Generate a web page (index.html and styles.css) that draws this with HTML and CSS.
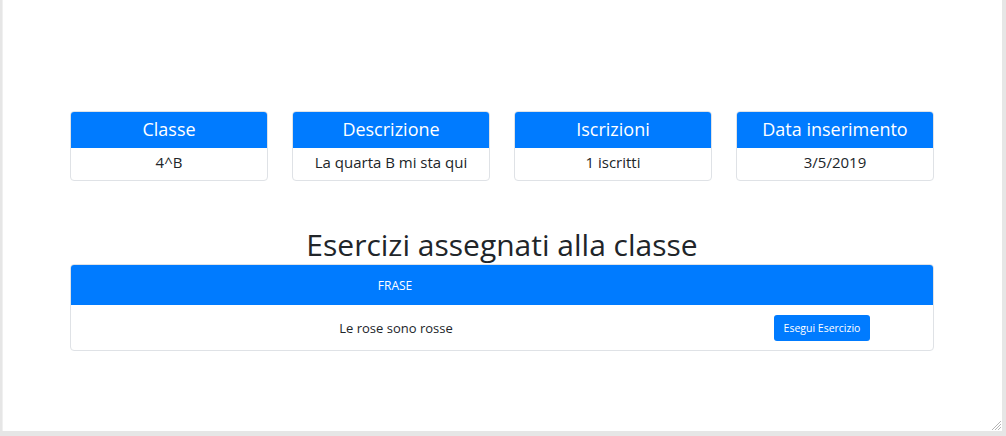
FILE: index.html
```html
<!DOCTYPE html>
<html lang="it">
<head>
<meta charset="utf-8">
<title>Classe</title>
<link rel="stylesheet" href="styles.css">
</head>
<body>
<div class="frame">
  <div class="container">
    <div class="cards">
      <div class="card"><div class="card-head">Classe</div><div class="card-body">4^B</div></div>
      <div class="card"><div class="card-head">Descrizione</div><div class="card-body">La quarta B mi sta qui</div></div>
      <div class="card"><div class="card-head">Iscrizioni</div><div class="card-body">1 iscritti</div></div>
      <div class="card"><div class="card-head">Data inserimento</div><div class="card-body">3/5/2019</div></div>
    </div>
    <h2 class="title">Esercizi assegnati alla classe</h2>
    <div class="table">
      <div class="thead">
        <div class="th">FRASE</div>
        <div class="th"></div>
      </div>
      <div class="tr">
        <div class="td">Le rose sono rosse</div>
        <div class="td td-btn"><button class="btn">Esegui Esercizio</button></div>
      </div>
    </div>
  </div>
  <svg class="grip" width="12" height="12" viewBox="0 0 12 12">
    <line x1="11" y1="2" x2="2" y2="11" stroke="#b5b5b5" stroke-width="1"/>
    <line x1="11" y1="5" x2="5" y2="11" stroke="#b5b5b5" stroke-width="1"/>
    <line x1="11" y1="8" x2="8" y2="11" stroke="#b5b5b5" stroke-width="1"/>
  </svg>
</div>
</body>
</html>
```
FILE: styles.css
```css
html, body {
  margin: 0;
  padding: 0;
  background: #e6e6e6;
}
body {
  width: 1006px;
  height: 436px;
  font-family: "Open Sans", "Noto Sans", sans-serif;
  color: #212529;
}
.frame {
  position: relative;
  box-sizing: border-box;
  margin-left: 2px;
  width: 1000px;
  height: 431px;
  background: #fff;
  border-left: 1px solid #f0f0f0;
}
.container {
  width: 864px;
  margin-left: 67px;
  padding-top: 111px;
}
.cards {
  display: flex;
  gap: 24px;
}
.card {
  width: 198px;
  box-sizing: border-box;
  border: 1px solid #dfe2e6;
  border-radius: 4px;
  overflow: hidden;
  text-align: center;
}
.card-head {
  background: #007bff;
  color: #fff;
  height: 37px;
  line-height: 36px;
  font-size: 18px;
  margin: -1px -1px 0;
}
.card-body {
  height: 32px;
  line-height: 28px;
  font-size: 15px;
}
.title {
  margin: 44px 0 0;
  height: 40px;
  line-height: 40px;
  text-align: center;
  font-weight: 400;
  font-size: 30px;
}
.table {
  margin-top: -1px;
  border: 1px solid #dfe2e6;
  border-radius: 4px;
  overflow: hidden;
}
.thead, .tr {
  display: grid;
  grid-template-columns: 650px 1fr;
}
.thead {
  background: #007bff;
  color: #fff;
  height: 41px;
  margin: -1px -1px 0;
}
.th {
  text-align: center;
  font-size: 12px;
  line-height: 44px;
}
.tr {
  height: 45px;
  align-items: center;
}
.td {
  text-align: center;
  font-size: 13px;
}
.td-btn {
  padding-right: 10px;
}
.btn {
  font-family: inherit;
  background: #007bff;
  color: #fff;
  border: none;
  border-radius: 3px;
  font-size: 10.5px;
  height: 26px;
  width: 96px;
  padding: 0;
  display: inline-block;
  vertical-align: middle;
}
.grip {
  position: absolute;
  right: 0;
  bottom: 0;
}
```
